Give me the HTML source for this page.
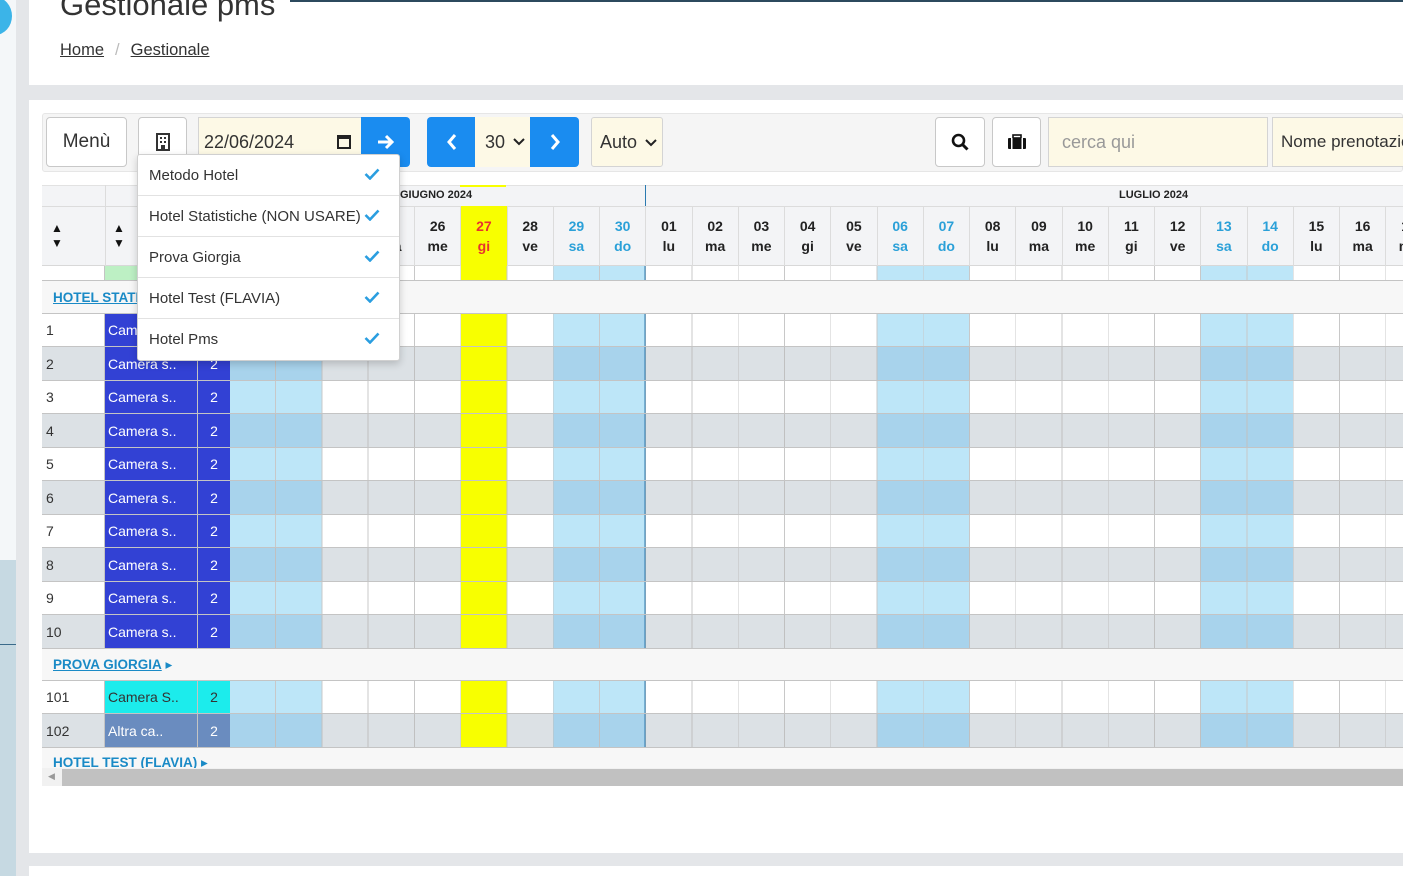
<!DOCTYPE html>
<html><head><meta charset="utf-8"><style>
*{box-sizing:border-box;margin:0;padding:0}
body{width:1403px;height:876px;overflow:hidden;background:#e4e6e9;font-family:"Liberation Sans","DejaVu Sans",sans-serif;color:#333;position:relative}
.a{position:absolute}
.btn{position:absolute;background:#fff;border:1px solid #c8c8c8;border-radius:4px;display:flex;align-items:center;justify-content:center;font-size:19px;color:#333}
.cream{position:absolute;background:#fdf9e6;border:1px solid #d4d4d4;display:flex;align-items:center;font-size:18px;color:#333;padding-left:8px}
.blue{position:absolute;background:#1a8cf0;display:flex;align-items:center;justify-content:center;color:#fff}
.row{position:absolute;left:42px;width:1361px;border-bottom:1px solid #c4c4c4;font-size:14px}
.row .c1{position:absolute;left:0;top:0;bottom:0;width:63px;padding-left:4px;display:flex;align-items:center;border-right:1px solid #c4c4c4}
.row .c2{position:absolute;left:63px;top:0;bottom:0;width:93px;padding-left:3px;display:flex;align-items:center;color:#fff;border-right:1px solid #c4c4c4}
.row .c3{position:absolute;left:156px;top:0;bottom:0;width:32px;display:flex;align-items:center;justify-content:center;color:#fff}
.row .d{position:absolute;left:188px;top:0;bottom:0;right:0}
.o .d{background:linear-gradient(to right,transparent 414.5px,#2a7ab0 414.5px 415.5px,transparent 415.5px),repeating-linear-gradient(to right,transparent 0 45.25px,#c8c8c8 45.25px 46.25px),linear-gradient(to right,#bde6f8 0 92.5px,transparent 92.5px 231.25px,#f8ff00 231.25px 277.5px,transparent 277.5px 323.75px,#bde6f8 323.75px 416.25px,transparent 416.25px 647.5px,#bde6f8 647.5px 740px,transparent 740px 971.25px,#bde6f8 971.25px 1063.75px,transparent 1063.75px),#fff}
.e .d{background:linear-gradient(to right,transparent 414.5px,#2a7ab0 414.5px 415.5px,transparent 415.5px),repeating-linear-gradient(to right,transparent 0 45.25px,#c0c0c0 45.25px 46.25px),linear-gradient(to right,#a8d3ec 0 92.5px,transparent 92.5px 231.25px,#f8ff00 231.25px 277.5px,transparent 277.5px 323.75px,#a8d3ec 323.75px 416.25px,transparent 416.25px 647.5px,#a8d3ec 647.5px 740px,transparent 740px 971.25px,#a8d3ec 971.25px 1063.75px,transparent 1063.75px),#dce1e5}
.o .c1{background:#fff}.e .c1{background:#dce1e5}
.bl{background:#3241d4}
.grp{position:absolute;left:42px;width:1361px;background:#f7f7f7;border-bottom:1px solid #c4c4c4;font-size:13.5px;font-weight:bold;color:#1a8ac6;padding-left:11px;display:flex;align-items:center}
.grp span{text-decoration:underline}
.days{position:absolute;left:230px;top:206px;height:60px;display:flex;font-size:14px;font-weight:bold;color:#222}
.days div{width:46.25px;flex:none;text-align:center;line-height:20px;padding-top:10px;border-right:1px solid #dcdcdc}
.days .w{color:#2aa0d8}.days .y{background:#f8ff00;color:#e8322e}
.dd{position:absolute;left:137px;top:154px;width:263px;height:207px;background:#fff;border:1px solid #d0d0d0;border-radius:3px;box-shadow:0 3px 8px rgba(0,0,0,.18);font-size:15px;color:#333}
.dd div{height:41px;border-bottom:1px solid #e2e2e2;padding-left:11px;display:flex;align-items:center;position:relative;white-space:nowrap}
.dd div:last-child{border-bottom:none}
.dd svg{position:absolute;left:226px;top:13px}
</style></head><body>
<div class="a" style="left:0;top:0;width:16px;height:560px;background:#f4f7f9"></div>
<div class="a" style="left:0;top:560px;width:16px;height:316px;background:#c6d9e2"></div>
<div class="a" style="left:0;top:644px;width:16px;height:1px;background:#3a6a8a"></div>
<div class="a" style="left:-22px;top:-3px;width:34px;height:38px;border-radius:50%;background:#3bb4e8"></div>
<div class="a" style="left:29px;top:0;width:1374px;height:85px;background:#fff"></div>
<div class="a" style="left:290px;top:0;width:1113px;height:2px;background:#2c4a5e"></div>
<div class="a" style="left:60px;top:-13px;font-size:31px;color:#333;font-weight:300">Gestionale pms</div>
<div class="a" style="left:60px;top:41px;font-size:16.5px;color:#333"><span style="text-decoration:underline">Home</span><span style="color:#bbb;margin:0 11px">/</span><span style="text-decoration:underline">Gestionale</span></div>
<div class="a" style="left:29px;top:100px;width:1374px;height:753px;background:#fff"></div>
<div class="a" style="left:29px;top:866px;width:1374px;height:10px;background:#fff"></div>
<div class="a" style="left:42px;top:113px;width:1361px;height:59px;background:#f5f5f5;border:1px solid #e6e6e6;border-radius:3px"></div>
<div class="btn" style="left:46px;top:117px;width:81px;height:50px">Menù</div>
<div class="btn" style="left:138px;top:117px;width:49px;height:50px"><svg width="14" height="18" viewBox="0 0 14 18"><rect x="1" y="1" width="12" height="16" fill="none" stroke="#333" stroke-width="2"/><rect x="4" y="4" width="2" height="2" fill="#333"/><rect x="8" y="4" width="2" height="2" fill="#333"/><rect x="4" y="8" width="2" height="2" fill="#333"/><rect x="8" y="8" width="2" height="2" fill="#333"/><rect x="5" y="12" width="4" height="5" fill="#333"/></svg></div>
<div class="cream" style="left:198px;top:117px;width:164px;height:50px;border-right:none;padding-left:5px">22/06/2024<svg style="position:absolute;left:138px;top:16px" width="14" height="15" viewBox="0 0 14 15"><rect x="1" y="2" width="12" height="12" fill="none" stroke="#222" stroke-width="2"/><rect x="1" y="2" width="12" height="3" fill="#222"/></svg></div>
<div class="blue" style="left:361px;top:117px;width:49px;height:50px;border-radius:0 4px 4px 0"><svg width="18" height="16" viewBox="0 0 18 16"><path d="M1 8H15M9 2L15 8L9 14" fill="none" stroke="#fff" stroke-width="3"/></svg></div>
<div class="blue" style="left:427px;top:117px;width:49px;height:50px;border-radius:4px 0 0 4px"><svg width="12" height="18" viewBox="0 0 12 18"><path d="M9 2L3 9L9 16" fill="none" stroke="#fff" stroke-width="3"/></svg></div>
<div class="cream" style="left:475px;top:117px;width:56px;height:50px;border:none;padding-left:10px">30<svg style="position:absolute;left:38px;top:21px" width="12" height="8" viewBox="0 0 12 8"><path d="M1 1L6 6L11 1" fill="none" stroke="#222" stroke-width="2"/></svg></div>
<div class="blue" style="left:530px;top:117px;width:49px;height:50px;border-radius:0 4px 4px 0"><svg width="12" height="18" viewBox="0 0 12 18"><path d="M3 2L9 9L3 16" fill="none" stroke="#fff" stroke-width="3"/></svg></div>
<div class="cream" style="left:591px;top:117px;width:72px;height:50px;border-radius:3px">Auto<svg style="position:absolute;left:53px;top:21px" width="12" height="8" viewBox="0 0 12 8"><path d="M1 1L6 6L11 1" fill="none" stroke="#222" stroke-width="2"/></svg></div>
<div class="btn" style="left:935px;top:117px;width:50px;height:50px"><svg width="18" height="18" viewBox="0 0 18 18"><circle cx="7.5" cy="7.5" r="5.5" fill="none" stroke="#111" stroke-width="2.6"/><path d="M11.5 11.5L16.5 16.5" stroke="#111" stroke-width="3"/></svg></div>
<div class="btn" style="left:992px;top:117px;width:49px;height:50px"><svg width="20" height="16" viewBox="0 0 20 16"><rect x="6" y="1" width="8" height="3" fill="none" stroke="#111" stroke-width="1.6"/><rect x="1" y="4" width="18" height="11" rx="1" fill="#111"/><rect x="4" y="4" width="1.5" height="11" fill="#fff"/><rect x="14.5" y="4" width="1.5" height="11" fill="#fff"/></svg></div>
<div class="cream" style="left:1048px;top:117px;width:220px;height:50px;color:#999;padding-left:13px">cerca qui</div>
<div class="cream" style="left:1272px;top:117px;width:140px;height:50px;font-size:17px;white-space:nowrap">Nome prenotazione</div>
<div class="a" style="left:42px;top:185px;width:1361px;height:81px;background:#f3f4f6;border-top:1px solid #e2e2e2;border-bottom:1px solid #d8d8d8"></div>
<div class="a" style="left:42px;top:206px;width:1361px;height:1px;background:#dcdcdc"></div>
<div class="a" style="left:105px;top:185px;width:1px;height:81px;background:#dcdcdc"></div>
<div class="a" style="left:645px;top:185px;width:1px;height:81px;background:#2a7ab0"></div>
<div class="a" style="left:460px;top:185px;width:46px;height:2px;background:#f8ff00"></div>
<div class="a" style="left:400px;top:189px;font-size:11px;font-weight:bold;color:#222">GIUGNO 2024</div>
<div class="a" style="left:1119px;top:189px;font-size:11px;font-weight:bold;color:#222">LUGLIO 2024</div>
<div class="a" style="left:51px;top:221px;font-size:12px;line-height:15px;color:#111">▲<br>▼</div>
<div class="a" style="left:113px;top:221px;font-size:12px;line-height:15px;color:#111">▲<br>▼</div>
<div class="days">
<div class="w">22<br>sa</div><div class="w">23<br>do</div><div>24<br>lu</div><div>25<br>ma</div><div>26<br>me</div><div class="y">27<br>gi</div><div>28<br>ve</div><div class="w">29<br>sa</div><div class="w">30<br>do</div><div>01<br>lu</div><div>02<br>ma</div><div>03<br>me</div><div>04<br>gi</div><div>05<br>ve</div><div class="w">06<br>sa</div><div class="w">07<br>do</div><div>08<br>lu</div><div>09<br>ma</div><div>10<br>me</div><div>11<br>gi</div><div>12<br>ve</div><div class="w">13<br>sa</div><div class="w">14<br>do</div><div>15<br>lu</div><div>16<br>ma</div><div>17<br>me</div>
</div>
<div class="row o" style="top:266px;height:15px"><div class="c1"></div><div class="c2" style="background:#bdf0c4;color:#333"></div><div class="c3 bl"></div><div class="d"></div></div>
<div class="grp" style="top:281px;height:33px"><span>HOTEL STATISTICHE</span>&nbsp;▸</div>
<div class="row o" style="top:314px;height:33px"><div class="c1">1</div><div class="c2 bl">Camera s..</div><div class="c3 bl">2</div><div class="d"></div></div>
<div class="row e" style="top:347px;height:34px"><div class="c1">2</div><div class="c2 bl">Camera s..</div><div class="c3 bl">2</div><div class="d"></div></div>
<div class="row o" style="top:381px;height:33px"><div class="c1">3</div><div class="c2 bl">Camera s..</div><div class="c3 bl">2</div><div class="d"></div></div>
<div class="row e" style="top:414px;height:34px"><div class="c1">4</div><div class="c2 bl">Camera s..</div><div class="c3 bl">2</div><div class="d"></div></div>
<div class="row o" style="top:448px;height:33px"><div class="c1">5</div><div class="c2 bl">Camera s..</div><div class="c3 bl">2</div><div class="d"></div></div>
<div class="row e" style="top:481px;height:34px"><div class="c1">6</div><div class="c2 bl">Camera s..</div><div class="c3 bl">2</div><div class="d"></div></div>
<div class="row o" style="top:515px;height:33px"><div class="c1">7</div><div class="c2 bl">Camera s..</div><div class="c3 bl">2</div><div class="d"></div></div>
<div class="row e" style="top:548px;height:34px"><div class="c1">8</div><div class="c2 bl">Camera s..</div><div class="c3 bl">2</div><div class="d"></div></div>
<div class="row o" style="top:582px;height:33px"><div class="c1">9</div><div class="c2 bl">Camera s..</div><div class="c3 bl">2</div><div class="d"></div></div>
<div class="row e" style="top:615px;height:34px"><div class="c1">10</div><div class="c2 bl">Camera s..</div><div class="c3 bl">2</div><div class="d"></div></div>
<div class="grp" style="top:649px;height:32px"><span>PROVA GIORGIA</span>&nbsp;▸</div>
<div class="row o" style="top:681px;height:33px"><div class="c1">101</div><div class="c2" style="background:#1cecec;color:#333">Camera S..</div><div class="c3" style="background:#1cecec;color:#333">2</div><div class="d"></div></div>
<div class="row e" style="top:714px;height:34px"><div class="c1">102</div><div class="c2" style="background:#6a8cbf">Altra ca..</div><div class="c3" style="background:#6a8cbf">2</div><div class="d"></div></div>
<div class="grp" style="top:748px;height:20px;border:none;align-items:flex-start;padding-top:7px;overflow:hidden"><span>HOTEL TEST (FLAVIA)</span>&nbsp;▸</div>
<div class="a" style="left:42px;top:768px;width:1361px;height:18px;background:#f1f1f1"></div>
<div class="a" style="left:62px;top:769px;width:1341px;height:17px;background:#c1c1c1"></div>
<div class="a" style="left:48px;top:771px;font-size:9px;color:#999">◀</div>
<div class="dd">
<div>Metodo Hotel<svg width="16" height="12" viewBox="0 0 16 12"><path d="M1.5 6L6 10.5L14.5 1.5" fill="none" stroke="#2a9ee0" stroke-width="2.6"/></svg></div>
<div>Hotel Statistiche (NON USARE)<svg width="16" height="12" viewBox="0 0 16 12"><path d="M1.5 6L6 10.5L14.5 1.5" fill="none" stroke="#2a9ee0" stroke-width="2.6"/></svg></div>
<div>Prova Giorgia<svg width="16" height="12" viewBox="0 0 16 12"><path d="M1.5 6L6 10.5L14.5 1.5" fill="none" stroke="#2a9ee0" stroke-width="2.6"/></svg></div>
<div>Hotel Test (FLAVIA)<svg width="16" height="12" viewBox="0 0 16 12"><path d="M1.5 6L6 10.5L14.5 1.5" fill="none" stroke="#2a9ee0" stroke-width="2.6"/></svg></div>
<div>Hotel Pms<svg width="16" height="12" viewBox="0 0 16 12"><path d="M1.5 6L6 10.5L14.5 1.5" fill="none" stroke="#2a9ee0" stroke-width="2.6"/></svg></div>
</div>
</body></html>
